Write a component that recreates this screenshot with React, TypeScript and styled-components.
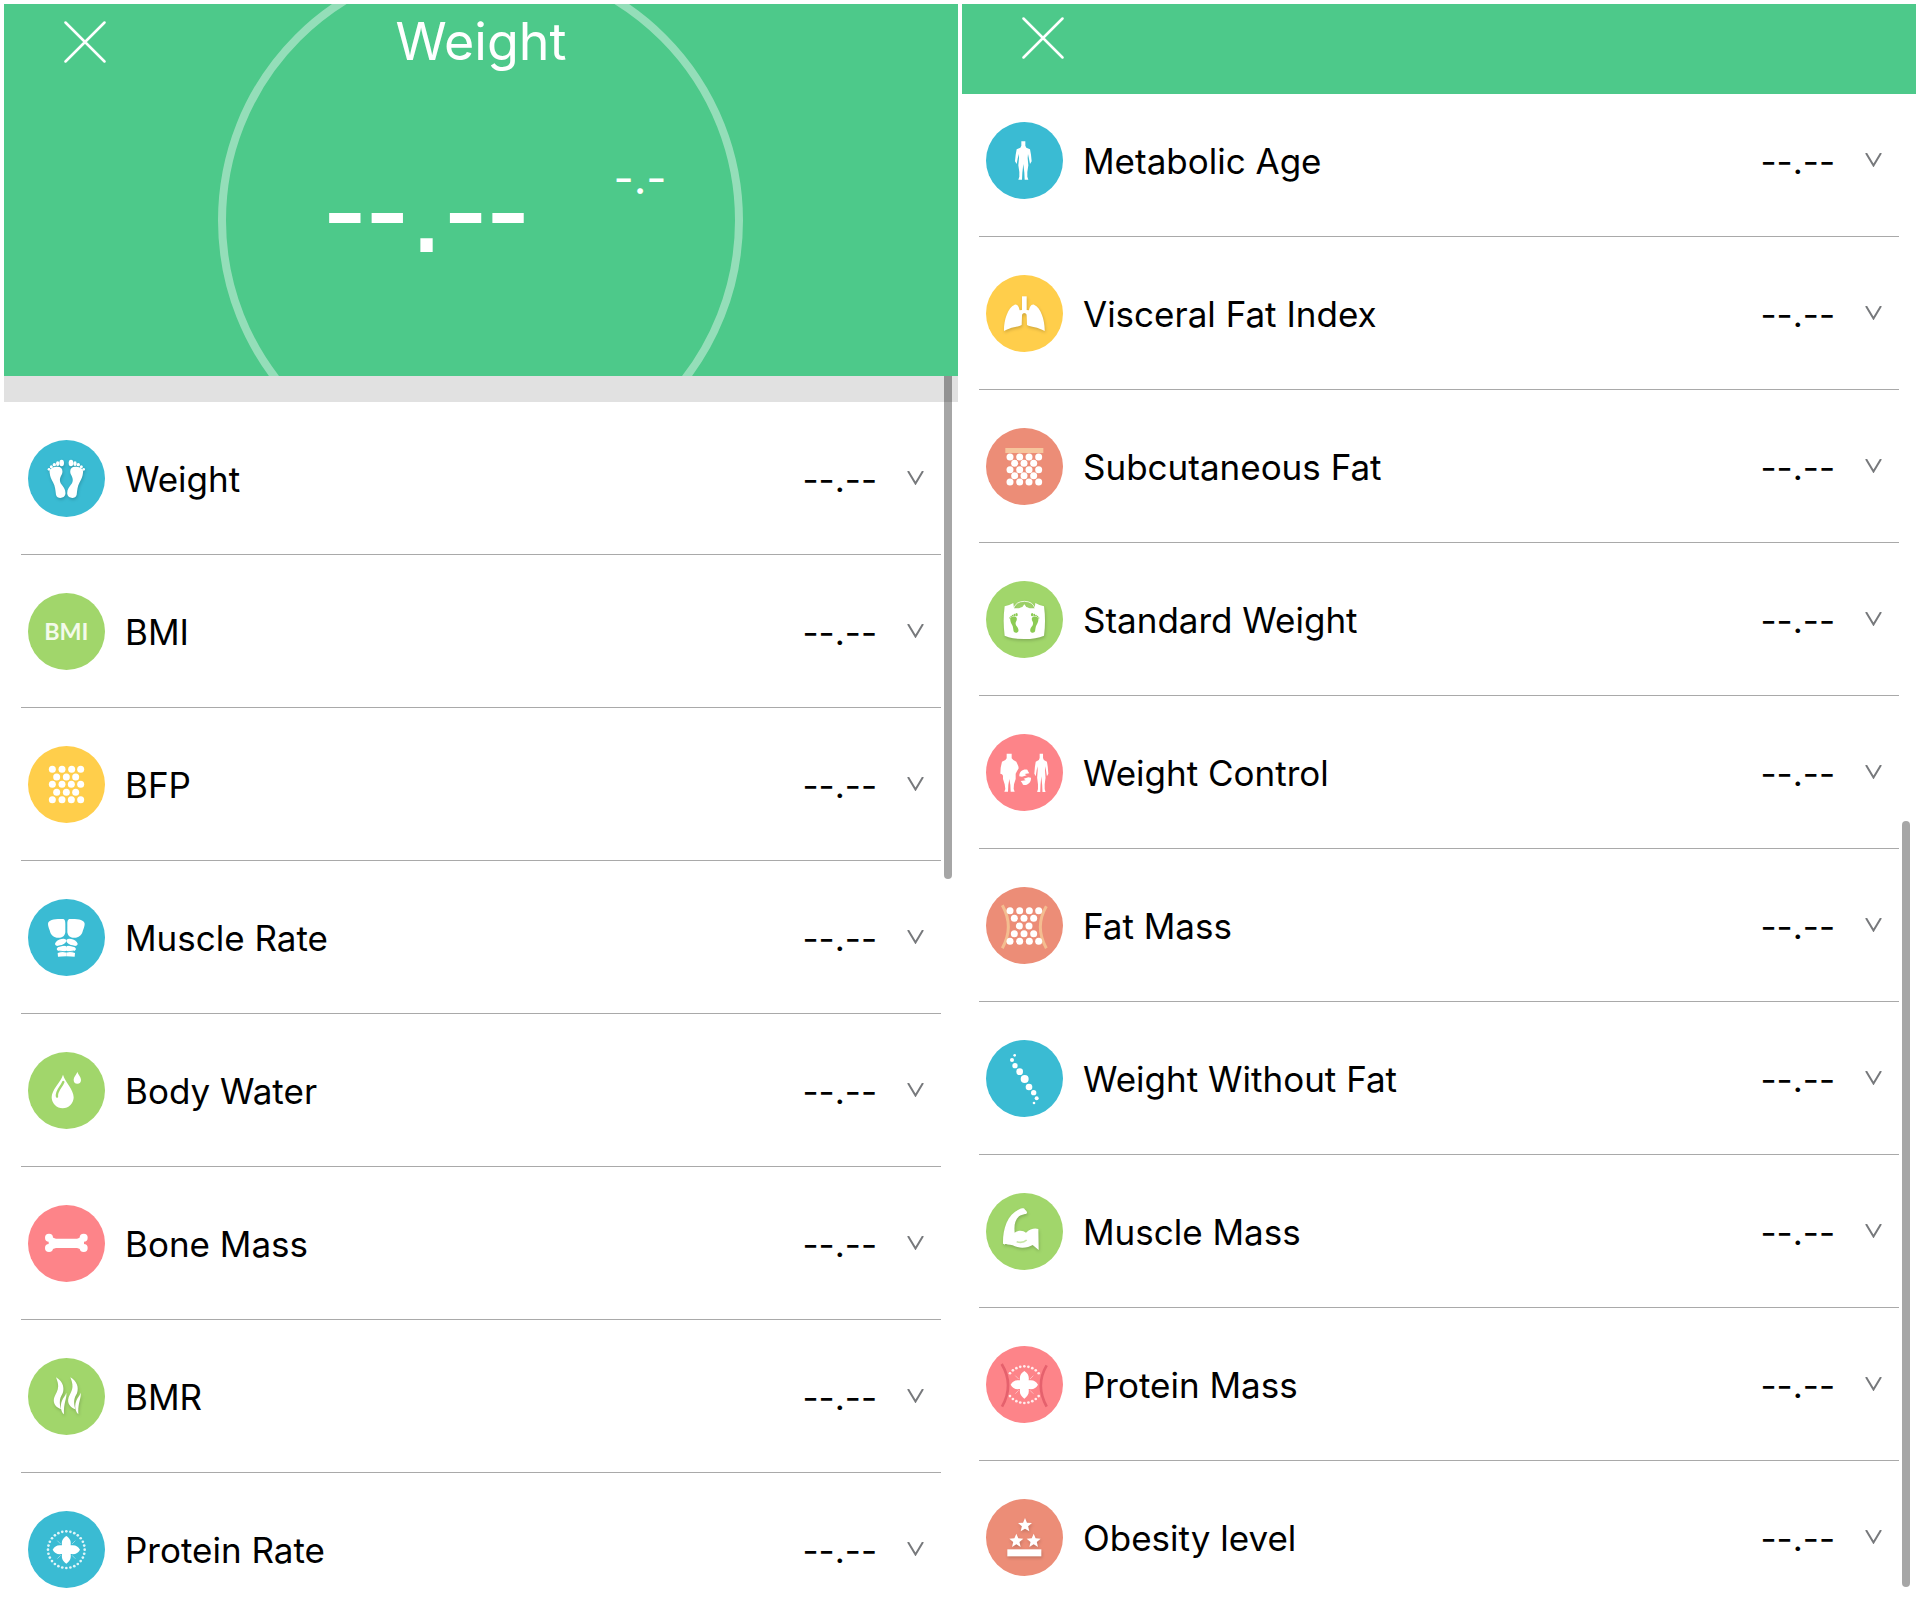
import React from "react";
import styled, { createGlobalStyle } from "styled-components";

const GlobalStyle = createGlobalStyle`
  *, *::before, *::after { box-sizing: border-box; }
  body {
    margin: 0;
    background: #fff;
    color: #000;
    font-family: Inter, "Liberation Sans", sans-serif;
  }
`;

const colors = {
  brand: "#4dc98a",
  blue: "#3abbd3",
  green: "#a1d66b",
  yellow: "#ffce4b",
  pink: "#fd8489",
  orange: "#ec8d77",
};

const Page = styled.main`
  display: grid;
  grid-template-columns: 1fr 1fr;
  gap: 4px;
  height: 100vh;
  padding: 4px;
`;

const Screen = styled.section`
  display: flex;
  flex-direction: column;
  min-width: 0;
  min-height: 0;
`;

const Hero = styled.header`
  position: relative;
  flex: none;
  height: 372px;
  overflow: hidden;
  background: ${colors.brand};
  color: #fff;
`;

const Ring = styled.div`
  position: absolute;
  top: -46px;
  left: 50%;
  width: 525px;
  height: 525px;
  margin-left: -263px;
  border: 8px solid rgba(255, 255, 255, 0.4);
  border-radius: 50%;
`;

const TitleBar = styled.div`
  position: relative;
  display: grid;
  grid-template-columns: 1fr auto 1fr;
  align-items: center;
  height: 76px;
  padding: 0 60px;
`;

const PlainBar = styled.header`
  flex: none;
  display: flex;
  align-items: flex-start;
  height: 90px;
  padding: 13px 60px;
  background: ${colors.brand};
  color: #fff;
`;

const Title = styled.h1`
  margin: 0;
  font-size: 52px;
  font-weight: 400;
  line-height: 74px;
`;

const CloseButton = styled.button`
  justify-self: start;
  display: flex;
  padding: 0;
  border: 0;
  background: none;
  color: inherit;
  cursor: pointer;
`;

const Reading = styled.div`
  position: relative;
  display: flex;
  justify-content: center;
  align-items: flex-start;
  gap: 84px;
  padding: 53px 0 0 28px;
`;

const BigValue = styled.output`
  font-family: "Liberation Sans", Arial, sans-serif;
  font-size: 128px;
  line-height: 150px;
`;

const Delta = styled.span`
  font-size: 44px;
  line-height: 90px;
`;

const Strip = styled.div`
  height: 26px;
  background: #e1e1e1;
`;

const Viewport = styled.div`
  position: relative;
  flex: 1;
  min-height: 0;
  overflow: hidden;
`;

const List = styled.ul<{ $scrolled?: boolean }>`
  list-style: none;
  margin: ${(p) => (p.$scrolled ? "-10px" : "0")} 0 0;
  padding: 0 17px;
`;

const Item = styled.li`
  border-bottom: 1px solid #a9a9a9;
`;

const RowButton = styled.button`
  display: flex;
  align-items: center;
  width: 100%;
  height: 152px;
  padding: 0 17px 0 7px;
  border: 0;
  background: none;
  color: inherit;
  font: inherit;
  font-size: 35px;
  line-height: 44px;
  text-align: left;
  cursor: pointer;
`;

const Badge = styled.svg`
  flex: none;
  width: 77px;
  height: 77px;
`;

const Name = styled.span`
  flex: 1;
  margin-left: 20px;
  padding-top: 2px;
`;

const Value = styled.span`
  margin-right: 30px;
  padding-top: 2px;
`;

const Thumb = styled.div<{ $top: string; $height: string; $flush?: boolean }>`
  position: absolute;
  top: ${(p) => p.$top};
  right: 6px;
  width: 8px;
  height: ${(p) => p.$height};
  border-radius: ${(p) => (p.$flush ? "0 0 4px 4px" : "4px")};
  background: rgba(0, 0, 0, 0.35);
`;

function Close() {
  return (
    <CloseButton type="button" aria-label="Close">
      <svg width="42" height="42" viewBox="0 0 42 42" fill="none" stroke="currentColor" strokeWidth="2.5" strokeLinecap="round">
        <path d="M1.5 1.5l39 39M40.5 1.5l-39 39" />
      </svg>
    </CloseButton>
  );
}

function Chevron() {
  return (
    <svg width="17" height="14" viewBox="0 0 17 14" fill="none" stroke="#77797c" strokeWidth="2" aria-hidden="true">
      <path d="M1 0l7.500 12.500L16 0" />
    </svg>
  );
}

const MIRROR = "translate(230 0) scale(-1 1)";

function Foot() {
  return (
    <>
      <path d="M65 98C62 84 78 80 88 80C101 80 106 90 102 102C97 112 93 118 98 130C107 142 114 150 112 163C110 176 87 178 84 164C82 150 82 140 75 127C69 116 66 108 65 98Z" />
      <ellipse cx="101" cy="69" rx="7" ry="10" />
      <ellipse cx="89" cy="71" rx="5" ry="7" />
      <circle cx="79" cy="74" r="5" />
      <circle cx="70" cy="80" r="4.500" />
      <circle cx="63" cy="88" r="4" />
    </>
  );
}

function Cells({ rows, r = 10.5 }: { rows: [number, number[]][]; r?: number }) {
  return (
    <>
      {rows.map(([y, xs]) => xs.map((x) => <circle key={`${x}-${y}`} cx={x} cy={y} r={r} />))}
    </>
  );
}

function Molecule({ sides = true }: { sides?: boolean }) {
  const dots = Array.from({ length: 28 }, (_, i) => {
    const a = (i / 28) * Math.PI * 2;
    return [115 + 55 * Math.cos(a), 116 + 55 * Math.sin(a)];
  }).filter(([x]) => sides || (x > 68 && x < 162));
  return (
    <>
      {dots.map(([x, y], i) => (
        <circle key={i} cx={x} cy={y} r="4" opacity="0.850" />
      ))}
      <path d="M88 89l10 10M142 89l-10 10M88 143l10-10M142 143l-10-10" stroke="#fff" strokeWidth="3" opacity="0.450" />
      <path d="M115 75C125 82 130 88 128 103C143 101 150 106 156 116C150 126 143 131 128 129C130 144 125 150 115 158C105 150 100 144 102 129C87 131 80 126 74 116C80 106 87 101 102 103C100 88 105 82 115 75Z" />
    </>
  );
}

const SLIM = "M-6 0H6V13L9 19L20 24L23 40L25 60L20 68L17 52L14 38L13 50L15 72L12 92L12 106L15 115H4L3 94L0 68L-3 94L-4 115H-15L-12 106L-12 92L-15 72L-13 50L-14 38L-17 52L-20 68L-25 60L-23 40L-20 24L-9 19L-6 13Z";
const STOUT = "M-8 0H7V14L12 19L21 24L27 38L28 44L22 54L19 60L19 76L14 92L13 106L16 114H4L3 94L0 76L-3 94L-4 114H-15L-12 106L-14 92L-19 76L-19 66L-22 62L-27 60L-26 42L-22 24L-12 19L-8 14Z";

function star(cx: number, cy: number, r: number) {
  return Array.from({ length: 10 }, (_, i) => {
    const a = (i * Math.PI) / 5 - Math.PI / 2;
    const d = i % 2 ? r * 0.45 : r;
    return `${cx + d * Math.cos(a)},${cy + d * Math.sin(a)}`;
  }).join(" ");
}

const glyphs = {
  feet: (
    <>
      <Foot />
      <g transform={MIRROR}><Foot /></g>
    </>
  ),
  bmi: (
    <text x="115" y="142" textAnchor="middle" fontFamily="Lato, sans-serif" fontWeight="700" fontSize="70" fill="#f3faea">
      BMI
    </text>
  ),
  cells: (
    <Cells
      rows={[
        [70, [73, 102, 131, 158]],
        [93, [86, 115, 143]],
        [115, [73, 102, 130, 158]],
        [139, [86, 115, 143]],
        [161, [73, 102, 130, 158]],
      ]}
    />
  ),
  torso: (
    <>
      {[undefined, MIRROR].map((t, i) => (
        <g key={i} transform={t}>
          <path d="M60 74C61 63 80 59 104 60C111 60 112 67 112 74V100C110 114 99 118 86 116C74 114 68 107 65 94C62 85 60 80 60 74Z" />
          <ellipse cx="98" cy="130" rx="18" ry="9" transform="rotate(-22 98 130)" />
          <ellipse cx="101" cy="148" rx="15" ry="7" transform="rotate(-14 101 148)" />
          <ellipse cx="103" cy="151" rx="14" ry="7" />
          <path d="M89 162Q100 158 115 160V172Q100 173 90 173Z" />
        </g>
      ))}
      <path d="M92 156Q115 162 138 156M88 142Q100 142 115 136Q130 142 142 142" fill="none" stroke={colors.blue} strokeWidth="2.500" />
    </>
  ),
  drops: (
    <>
      <path d="M105 68C112 92 137 112 137 136A33 33 0 0 1 71 136C71 112 98 92 105 68Z" />
      <path d="M106 90C100 106 84 116 87 134" fill="none" stroke={colors.green} strokeWidth="7" strokeLinecap="round" />
      <path d="M148 59C150 68 159 74 159 84A11 11 0 0 1 137 84C137 74 146 68 148 59Z" />
    </>
  ),
  bone: (
    <>
      <path d="M62 90Q76 100 84 101H147Q155 100 168 90V138Q155 130 147 129H84Q76 130 62 138Z" />
      <circle cx="63" cy="98" r="12" />
      <circle cx="63" cy="129" r="12" />
      <circle cx="167" cy="98" r="12" />
      <circle cx="167" cy="129" r="12" />
    </>
  ),
  heat: (
    <>
      {[0, 43].map((x) => (
        <g key={x} transform={`translate(${x} 0)`}>
          <path d="M84 58C104 70 110 88 104 106C96 120 92 130 99 154C84 148 73 136 79 118C86 100 98 92 84 58Z" />
          <path d="M115 104C117 122 106 134 108 169C98 160 96 142 102 128C106 118 112 114 115 104Z" />
        </g>
      ))}
    </>
  ),
  molecule: <Molecule />,
  person: <path d={SLIM} transform="translate(112 58)" />,
  lungs: (
    <>
      {[undefined, MIRROR].map((t, i) => (
        <path key={i} transform={t} d="M54 168C53 140 64 98 86 89C96 87 99 98 101 106L116 104V114Q108 114 108 122L107 150C96 156 74 156 54 168Z" />
      ))}
      <rect x="108" y="64" width="14" height="46" />
    </>
  ),
  skin: (
    <>
      <rect x="58" y="60" width="114" height="15" fill="#f6c59c" />
      <Cells
        rows={[
          [87, [72, 101, 129, 158]],
          [106, [86, 114, 143]],
          [125, [72, 101, 129, 158]],
          [143, [86, 114, 143]],
          [162, [72, 101, 129, 158]],
        ]}
      />
    </>
  ),
  scale: (
    <>
      <path d="M56 76Q68 74 82 66L84 82H146L148 66Q162 74 174 76Q180 120 174 164Q150 174 115 174Q80 174 56 164Q50 120 56 76Z" />
      <path d="M83 82Q90 61 115 61Q140 61 147 82" fill="none" stroke="#fff" strokeWidth="3" opacity="0.800" />
      <path d="M98 84Q104 78 109 78L115 70L121 78Q126 78 132 84Z" />
      <g fill="#8ccb54">
        <g transform="translate(39 65) scale(0.520)"><Foot /></g>
        <g transform="translate(191 65) scale(-0.520 0.520)"><Foot /></g>
      </g>
    </>
  ),
  control: (
    <>
      <path d={STOUT} transform="translate(70 59)" />
      <path d={SLIM} transform="translate(166 59) scale(0.840 1)" />
      <path d="M100 127C99 112 112 104 124 107L127 113L130 118L116 120L122 124L108 128Z" />
      <path d="M135 131C136 146 123 156 111 152L108 146L104 141L119 139L113 134L127 130Z" />
    </>
  ),
  fatMass: (
    <>
      <g fill="none" stroke="#f4bd90" strokeWidth="9">
        <path d="M49 55Q85 119 49 184" />
        <path d="M181 58Q145 119 181 184" />
      </g>
      <Cells
        rows={[
          [71, [72, 101, 130, 158]],
          [94, [85, 114, 143]],
          [117, [100, 129]],
          [140, [85, 114, 143]],
          [163, [72, 101, 130, 158]],
        ]}
      />
    </>
  ),
  spine: (
    <>
      {[[86, 46, 4], [78, 60, 6], [87, 77, 8], [101, 95, 10], [116, 117, 12], [129, 141, 10], [143, 158, 8], [152, 175, 6], [144, 189, 4]].map(
        ([x, y, r]) => <circle key={y} cx={x} cy={y} r={r} />
      )}
    </>
  ),
  biceps: (
    <>
      <path d="M51 152C50 112 62 66 100 49C107 44 115 45 117 50C126 56 124 64 117 63C110 66 104 66 99 70C86 82 84 98 86 119C98 110 112 112 120 119C132 108 146 104 157 108L158 171L140 156C126 165 100 168 80 157C70 153 60 156 51 152Z" />
      <path d="M92 146Q110 152 122 141" fill="none" stroke="#c8e6a8" strokeWidth="5" />
    </>
  ),
  proteinMass: (
    <>
      <g fill="none" stroke="#e5616d" strokeWidth="8">
        <path d="M47 54Q85 117 48 182" />
        <path d="M182 58Q147 117 182 182" />
      </g>
      <Molecule sides={false} />
    </>
  ),
  stars: (
    <>
      <polygon points={star(117, 79, 22)} />
      <polygon points={star(91, 126, 22)} />
      <polygon points={star(143, 126, 22)} />
      <rect x="64" y="151" width="102" height="21" />
    </>
  ),
};

type Metric = { name: string; color: string; glyph: keyof typeof glyphs; shadow?: boolean };

const firstScreen: Metric[] = [
  { name: "Weight", color: colors.blue, glyph: "feet", shadow: true },
  { name: "BMI", color: colors.green, glyph: "bmi" },
  { name: "BFP", color: colors.yellow, glyph: "cells" },
  { name: "Muscle Rate", color: colors.blue, glyph: "torso" },
  { name: "Body Water", color: colors.green, glyph: "drops" },
  { name: "Bone Mass", color: colors.pink, glyph: "bone" },
  { name: "BMR", color: colors.green, glyph: "heat", shadow: true },
  { name: "Protein Rate", color: colors.blue, glyph: "molecule" },
];

const secondScreen: Metric[] = [
  { name: "Metabolic Age", color: colors.blue, glyph: "person" },
  { name: "Visceral Fat Index", color: colors.yellow, glyph: "lungs", shadow: true },
  { name: "Subcutaneous Fat", color: colors.orange, glyph: "skin" },
  { name: "Standard Weight", color: colors.green, glyph: "scale", shadow: true },
  { name: "Weight Control", color: colors.pink, glyph: "control" },
  { name: "Fat Mass", color: colors.orange, glyph: "fatMass" },
  { name: "Weight Without Fat", color: colors.blue, glyph: "spine" },
  { name: "Muscle Mass", color: colors.green, glyph: "biceps", shadow: true },
  { name: "Protein Mass", color: colors.pink, glyph: "proteinMass" },
  { name: "Obesity level", color: colors.orange, glyph: "stars", shadow: true },
];

const Glyph = styled.g<{ $shadow?: boolean }>`
  fill: #fff;
  filter: ${(p) => (p.$shadow ? "drop-shadow(2px 5px 4px rgba(0, 0, 0, 0.18))" : "none")};
`;

function MetricList({ metrics, scrolled }: { metrics: Metric[]; scrolled?: boolean }) {
  return (
    <List $scrolled={scrolled}>
      {metrics.map((m) => (
        <Item key={m.name}>
          <RowButton type="button" aria-expanded="false">
            <Badge viewBox="0 0 231 231" aria-hidden="true">
              <circle cx="115.500" cy="115.500" r="115.500" fill={m.color} />
              <Glyph $shadow={m.shadow}>{glyphs[m.glyph]}</Glyph>
            </Badge>
            <Name>{m.name}</Name>
            <Value>--.--</Value>
            <Chevron />
          </RowButton>
        </Item>
      ))}
    </List>
  );
}

export default function App() {
  return (
    <>
      <GlobalStyle />
      <Page>
        <Screen aria-label="Weight summary">
          <Hero>
            <Ring />
            <TitleBar>
              <Close />
              <Title>Weight</Title>
            </TitleBar>
            <Reading>
              <BigValue>--.--</BigValue>
              <Delta>-.-</Delta>
            </Reading>
          </Hero>
          <Viewport>
            <Strip />
            <MetricList metrics={firstScreen} />
            <Thumb $top="0" $height="41.200%" $flush />
          </Viewport>
        </Screen>
        <Screen aria-label="More measurements">
          <PlainBar>
            <Close />
          </PlainBar>
          <Viewport>
            <MetricList metrics={secondScreen} scrolled />
            <Thumb $top="48.400%" $height="51%" />
          </Viewport>
        </Screen>
      </Page>
    </>
  );
}
